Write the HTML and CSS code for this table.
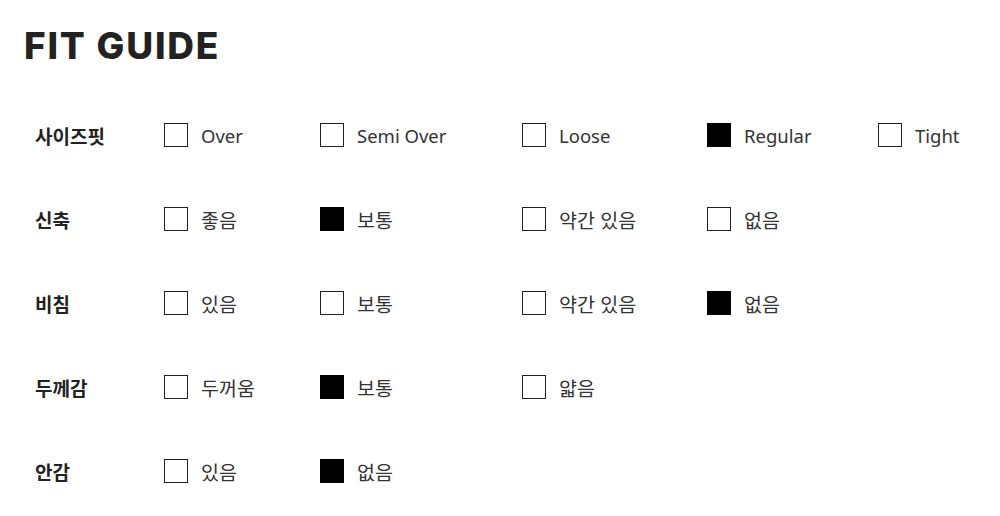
FILE: index.html
```html
<!DOCTYPE html>
<html lang="ko">
<head>
<meta charset="utf-8">
<link rel="stylesheet" href="styles.css">
</head>
<body>
<div class="page">
  <h1 class="title">FIT GUIDE</h1>
  <div class="guide">
    <div class="row">
      <div class="label">사이즈핏</div>
      <div class="opt"><span class="box"></span>Over</div>
      <div class="opt"><span class="box"></span>Semi Over</div>
      <div class="opt"><span class="box"></span>Loose</div>
      <div class="opt"><span class="box on"></span>Regular</div>
      <div class="opt"><span class="box"></span>Tight</div>
    </div>
    <div class="row">
      <div class="label">신축</div>
      <div class="opt ko"><span class="box"></span>좋음</div>
      <div class="opt ko"><span class="box on"></span>보통</div>
      <div class="opt ko"><span class="box"></span>약간 있음</div>
      <div class="opt ko"><span class="box"></span>없음</div>
    </div>
    <div class="row">
      <div class="label">비침</div>
      <div class="opt ko"><span class="box"></span>있음</div>
      <div class="opt ko"><span class="box"></span>보통</div>
      <div class="opt ko"><span class="box"></span>약간 있음</div>
      <div class="opt ko"><span class="box on"></span>없음</div>
    </div>
    <div class="row">
      <div class="label">두께감</div>
      <div class="opt ko"><span class="box"></span>두꺼움</div>
      <div class="opt ko"><span class="box on"></span>보통</div>
      <div class="opt ko"><span class="box"></span>얇음</div>
    </div>
    <div class="row">
      <div class="label">안감</div>
      <div class="opt ko"><span class="box"></span>있음</div>
      <div class="opt ko"><span class="box on"></span>없음</div>
    </div>
  </div>
</div>
</body>
</html>
```

FILE: styles.css
```css
html, body {
  margin: 0;
  padding: 0;
  background: #fff;
}
.page {
  padding: 24px 0 0 24px;
  font-family: "Noto Sans", "Noto Sans CJK KR", sans-serif;
  color: #222;
}
.title {
  margin: 0;
  font-family: Inter, "Noto Sans", sans-serif;
  font-weight: 800;
  font-size: 37px;
  line-height: 44px;
  letter-spacing: 1.8px;
  color: #222;
}
.guide {
  margin-top: 25px;
  padding-left: 11px;
  display: flex;
  flex-direction: column;
}
.row {
  display: grid;
  grid-template-columns: 129px 156px 202px 185px 171px auto;
  align-items: center;
  height: 84px;
}
.label {
  font-family: "Noto Sans CJK KR", sans-serif;
  font-weight: 700;
  font-size: 19px;
  color: #222;
}
.opt {
  display: flex;
  align-items: center;
  font-size: 18.5px;
  color: #333;
  font-family: "Noto Sans", "Noto Sans CJK KR", sans-serif;
}
.opt.ko {
  font-family: "Noto Sans CJK KR", sans-serif;
  font-size: 19.5px;
}
.box {
  width: 22px;
  height: 22px;
  border: 1.5px solid #222;
  margin-right: 13px;
  flex: none;
}
.box.on {
  background: #000;
  border-color: #000;
}
```
